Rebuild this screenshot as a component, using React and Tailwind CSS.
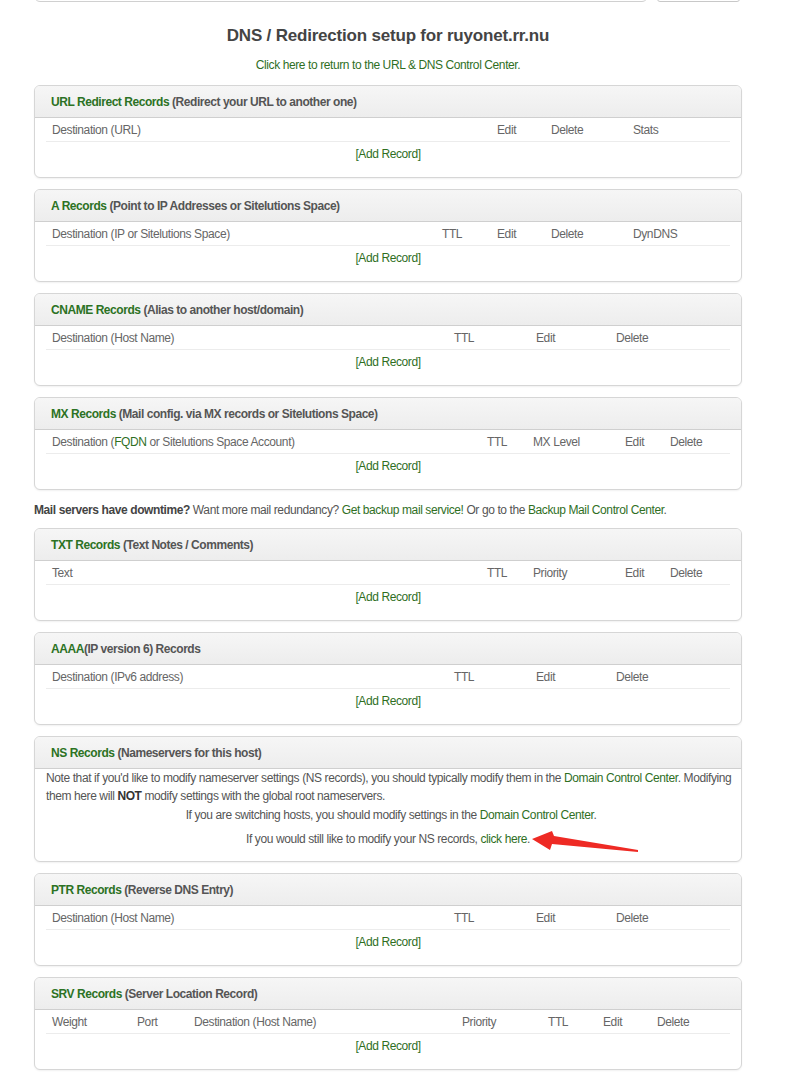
import React from 'react';

const green = 'text-[#2c7224]';

function Link({ children }) {
  return <a className="text-[#2f6f1f]">{children}</a>;
}

const panels = [
  {
    title: 'URL Redirect Records',
    note: '(Redirect your URL to another one)',
    cols: [['Destination (URL)', 'w-[445px]'], ['Edit', 'w-[54px]'], ['Delete', 'w-[82px]'], ['Stats', '']],
  },
  {
    title: 'A Records',
    note: '(Point to IP Addresses or Sitelutions Space)',
    cols: [['Destination (IP or Sitelutions Space)', 'w-[390px]'], ['TTL', 'w-[55px]'], ['Edit', 'w-[54px]'], ['Delete', 'w-[82px]'], ['DynDNS', '']],
  },
  {
    title: 'CNAME Records',
    note: '(Alias to another host/domain)',
    cols: [['Destination (Host Name)', 'w-[402px]'], ['TTL', 'w-[82px]'], ['Edit', 'w-[80px]'], ['Delete', '']],
  },
  {
    title: 'MX Records',
    note: '(Mail config. via MX records or Sitelutions Space)',
    cols: [
      [<>Destination (<Link>FQDN</Link> or Sitelutions Space Account)</>, 'w-[435px]'],
      ['TTL', 'w-[46px]'], ['MX Level', 'w-[92px]'], ['Edit', 'w-[45px]'], ['Delete', ''],
    ],
  },
];

const panels2 = [
  {
    title: 'TXT Records',
    note: '(Text Notes / Comments)',
    cols: [['Text', 'w-[435px]'], ['TTL', 'w-[46px]'], ['Priority', 'w-[92px]'], ['Edit', 'w-[45px]'], ['Delete', '']],
  },
  {
    title: 'AAAA',
    note: '(IP version 6) Records',
    tight: true,
    cols: [['Destination (IPv6 address)', 'w-[402px]'], ['TTL', 'w-[82px]'], ['Edit', 'w-[80px]'], ['Delete', '']],
  },
];

const panels3 = [
  {
    title: 'PTR Records',
    note: '(Reverse DNS Entry)',
    cols: [['Destination (Host Name)', 'w-[402px]'], ['TTL', 'w-[82px]'], ['Edit', 'w-[80px]'], ['Delete', '']],
  },
  {
    title: 'SRV Records',
    note: '(Server Location Record)',
    cols: [
      ['Weight', 'w-[85px]'], ['Port', 'w-[57px]'], ['Destination (Host Name)', 'w-[268px]'],
      ['Priority', 'w-[86px]'], ['TTL', 'w-[55px]'], ['Edit', 'w-[54px]'], ['Delete', ''],
    ],
  },
];

function Box({ title, note, tight, children }) {
  return (
    <div className="rounded-[6px] border border-[#d6d6d6] bg-white shadow-[0_1px_2px_rgba(0,0,0,0.06)] overflow-hidden">
      <div className="h-[32px] flex items-center px-[16px] bg-gradient-to-b from-[#f6f6f6] to-[#ededed] border-b border-[#cfcfcf] text-[12px] font-bold text-[#555] tracking-[-0.45px]">
        <span className={green}>{title}</span>
        {tight ? '' : '\u00a0'}
        <span>{note}</span>
      </div>
      {children}
    </div>
  );
}

function RecordPanel({ p }) {
  return (
    <Box title={p.title} note={p.note} tight={p.tight}>
      <div className="mx-[11px] pb-[11px]">
        <div className="h-[24px] flex items-center pl-[6px] border-b border-[#ececec] text-[12px] text-[#666]">
          {p.cols.map(([label, w], i) => (
            <div key={i} className={w}>{label}</div>
          ))}
        </div>
        <div className="h-[24px] flex items-center justify-center text-[12px]">
          <Link>[Add Record]</Link>
        </div>
      </div>
    </Box>
  );
}

function Arrow() {
  return (
    <svg className="absolute left-[484px] -top-[2px]" width="112" height="26" viewBox="0 0 112 26">
      <polygon points="2,11 22,3 24,8 108,22 108,24 22,16 20,22" fill="#ee2a24" />
    </svg>
  );
}

export default function App() {
  return (
    <div className="min-h-screen bg-white font-['Liberation_Sans',Arial,sans-serif] text-[#555] text-[12px] tracking-[-0.4px]">
      <div className="relative h-[3px] mx-[34px]">
        <div className="absolute left-0 -top-[10px] w-[614px] h-[12px] border border-[#d0d0d0] rounded-b-[6px] bg-white" />
        <div className="absolute left-[623px] -top-[10px] w-[83px] h-[12px] border border-[#c8c8c8] rounded-b-[3px] bg-white" />
      </div>
      <div className="w-[708px] mx-[34px] flex flex-col">
        <h1 className="mt-[23px] text-center text-[17px] font-bold text-[#444] leading-[20px] tracking-[-0.2px]">
          DNS / Redirection setup for ruyonet.rr.nu
        </h1>
        <p className="mt-[12px] text-center leading-[14px] text-[12px]">
          <Link>Click here to return to the URL &amp; DNS Control Center.</Link>
        </p>
        <div className="mt-[13px] flex flex-col gap-[11px]">
          {panels.map((p) => (
            <RecordPanel key={p.title} p={p} />
          ))}
        </div>
        <p className="mt-[13px] mb-[11px] leading-[14px] text-[12px] text-[#555]">
          <b className="text-[#444]">Mail servers have downtime?</b> Want more mail redundancy?{' '}
          <Link>Get backup mail service!</Link> Or go to the <Link>Backup Mail Control Center</Link>.
        </p>
        <div className="flex flex-col gap-[11px]">
          {panels2.map((p) => (
            <RecordPanel key={p.title} p={p} />
          ))}
          <Box title="NS Records" note="(Nameservers for this host)">
            <div className="pl-[11px] pr-[5px] pb-[13px] text-[12px] leading-[18px] text-[#555]">
              <p>
                Note that if you'd like to modify nameserver settings (NS records), you should typically modify them in the{' '}
                <Link>Domain Control Center</Link>. Modifying them here will <b className="text-[#333]">NOT</b> modify settings with the global root nameservers.
              </p>
              <p className="text-center mt-[1px]">
                If you are switching hosts, you should modify settings in the <Link>Domain Control Center</Link>.
              </p>
              <p className="relative text-center mt-[6px] pr-[6px]">
                If you would still like to modify your NS records, <Link>click here</Link>.
                <Arrow />
              </p>
            </div>
          </Box>
          {panels3.map((p) => (
            <RecordPanel key={p.title} p={p} />
          ))}
        </div>
      </div>
    </div>
  );
}
